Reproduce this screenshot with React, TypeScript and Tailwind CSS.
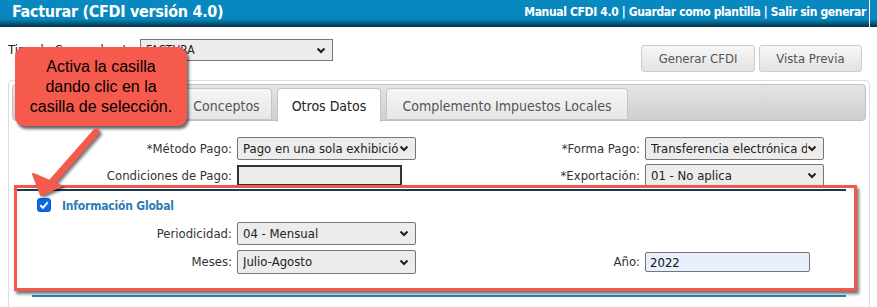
import React from "react";

const fuente = "font-['DejaVu_Sans_Condensed','DejaVu_Sans',sans-serif]";

function Chevron() {
  return (
    <svg width="10" height="7" viewBox="0 0 10 7" className="shrink-0">
      <polyline points="1.5,1.5 5,5 8.5,1.5" fill="none" stroke="#1f1f1f" strokeWidth="2" />
    </svg>
  );
}

function Combo({ texto, ancho, alto = 23 }: any) {
  return (
    <div
      className="flex items-center justify-between border border-[#767676] bg-[#ececec] rounded-[2px] pl-[5px] pr-[6px] text-[13px] text-[#222] overflow-hidden"
      style={{ width: ancho, height: alto }}
    >
      <span className="whitespace-nowrap overflow-hidden">{texto}</span>
      <Chevron />
    </div>
  );
}

function Etiqueta({ texto, ancho }: any) {
  return (
    <div className="text-right text-[13px] text-[#333] pr-[5px] whitespace-nowrap" style={{ width: ancho }}>
      {texto}
    </div>
  );
}

function Tab({ texto, activo, ancho }: any) {
  return (
    <div
      className={
        activo
          ? "h-[34px] pt-[7px] bg-white border border-[#c5c5c5] border-b-0 rounded-t-[4px] text-[14px] text-[#222] text-center whitespace-nowrap -mb-[2px]"
          : "h-[32px] pt-[7px] bg-[linear-gradient(#f6f6f6,#e6e6e6)] border border-[#c5c5c5] rounded-t-[4px] text-[14px] text-[#555] text-center whitespace-nowrap"
      }
      style={{ width: ancho }}
    >
      {texto}
    </div>
  );
}

export default function App() {
  return (
    <main className={`relative w-[877px] h-[307px] overflow-hidden bg-white ${fuente}`}>
      {/* barra superior */}
      <header className="h-[27px] flex items-center justify-between pl-[12px] bg-[linear-gradient(to_bottom,#0889c0_0%,#0786bc_72%,#055a80_86%,#0b3046_100%)]">
        <h1 className="text-[16px] tracking-[-0.3px] font-bold text-white leading-none pb-[3px]">Facturar (CFDI versión 4.0)</h1>
        <div className="flex items-center h-full">
          <span className="text-[12px] tracking-[-0.35px] font-bold text-white pb-[3px] pr-[2px]">
            Manual CFDI 4.0 | Guardar como plantilla | Salir sin generar
          </span>
          <div className="w-[1px] h-full bg-white ml-[1px] mr-[7px]" />
        </div>
      </header>

      {/* tipo de comprobante y botones */}
      <div className="flex justify-between items-start pl-[8px] pr-[15px] mt-[12px]">
        <div className="flex items-center">
          <span className="text-[13px] text-[#222] w-[132px] whitespace-nowrap">Tipo de Comprobante:</span>
          <div className="flex items-center justify-between w-[193px] h-[22px] border border-[#767676] bg-[#ececec] pl-[5px] pr-[6px] text-[12px] text-[#222]">
            FACTURA
            <Chevron />
          </div>
        </div>
        <div className="flex gap-[4px] mt-[6px]">
          <button className="w-[114px] h-[27px] border border-[#cccccc] rounded-[3px] bg-[linear-gradient(#f7f7f7,#e2e2e2)] text-[13px] text-[#555]">
            Generar CFDI
          </button>
          <button className="w-[103px] h-[27px] border border-[#cccccc] rounded-[3px] bg-[linear-gradient(#f7f7f7,#e2e2e2)] text-[13px] text-[#555]">
            Vista Previa
          </button>
        </div>
      </div>

      {/* panel de pestañas */}
      <section className="ml-[8px] mr-[7px] mt-[8px] border border-[#dddddd] rounded-[4px] h-[260px]">
        <div className="mx-[3px] mt-[3px] h-[37px] border border-[#c0c0c0] rounded-[4px] bg-[linear-gradient(#e4e4e4,#cfcfcf)] flex items-end gap-[5px] pl-[4px]">
          <Tab texto="Datos Generales" ancho={159} />
          <Tab texto="Conceptos" ancho={91} />
          <Tab texto="Otros Datos" ancho={104} activo />
          <Tab texto="Complemento Impuestos Locales" ancho={242} />
        </div>

        <div className="pt-[16px]">
          <div className="flex items-center h-[23px]">
            <Etiqueta texto="*Método Pago:" ancho={228} />
            <Combo texto="Pago en una sola exhibición" ancho={179} />
            <Etiqueta texto="*Forma Pago:" ancho={229} />
            <Combo texto="Transferencia electrónica de fondos" ancho={179} />
          </div>
          <div className="flex items-center h-[23px] mt-[4px]">
            <Etiqueta texto="Condiciones de Pago:" ancho={228} />
            <div className="w-[165px] h-[21px] border-2 border-[#333] bg-[#ececec]" />
            <Etiqueta texto="*Exportación:" ancho={243} />
            <Combo texto="01 - No aplica" ancho={179} />
          </div>

          {/* información global */}
          <div className="relative ml-[5px] -mt-[2px] w-[843px] h-[106px] border-[3px] border-[#f4574a] shadow-[2px_3px_3px_rgba(0,0,0,0.55)]">
            <div className="border-t-2 border-[#123b55] mt-[1px] mr-[8px]">
              <div className="flex items-center pl-[20px] pt-[3px] gap-[11px]">
                <svg width="14" height="14" viewBox="0 0 14 14">
                  <rect x="0.5" y="0.5" width="13" height="13" rx="2.5" fill="#0b68e6" stroke="#0a5cc9" />
                  <polyline points="3.3,7.2 6,9.8 10.8,4.2" fill="none" stroke="white" strokeWidth="2" />
                </svg>
                <span className="text-[12px] tracking-[-0.2px] font-bold text-[#2d7bb7] mt-[3px]">Información Global</span>
              </div>
              <div className="flex items-center h-[23px] mt-[7px]">
                <Etiqueta texto="Periodicidad:" ancho={220} />
                <Combo texto="04 - Mensual" ancho={179} />
              </div>
              <div className="flex items-center h-[24px] mt-[5px]">
                <Etiqueta texto="Meses:" ancho={220} />
                <Combo texto="Julio-Agosto" ancho={179} alto={24} />
                <Etiqueta texto="Año:" ancho={229} />
                <div className="w-[165px] h-[20px] border border-[#767676] rounded-[2px] bg-[#e8f0fe] text-[13px] text-[#111] pl-[4px] leading-[19px]">
                  2022
                </div>
              </div>
            </div>
          </div>
          <div className="ml-[23px] mt-[4px] w-[814px] h-[2px] bg-[#1a89c4]" />
        </div>
      </section>

      {/* globo de ayuda */}
      <div className="absolute left-[15px] top-[47px] w-[172px] h-[79px] rounded-[9px] bg-[#f65a4d] shadow-[2px_3px_3px_rgba(0,0,0,0.6)] flex items-center justify-center text-center font-['Liberation_Sans',Arial,sans-serif] text-[16px] leading-[20px] text-black">
        Activa la casilla
        <br />
        dando clic en la
        <br />
        casilla de selección.
      </div>
      <svg className="absolute left-0 top-0" width="877" height="307" viewBox="0 0 877 307">
        <g style={{ filter: "drop-shadow(2px 2px 1.5px rgba(0,0,0,0.55))" }}>
          <line x1="96" y1="132" x2="52" y2="182" stroke="#f65a4d" strokeWidth="7" strokeLinecap="round" />
          <polygon points="41,195 33,174 61,186" fill="#f65a4d" stroke="#f65a4d" strokeWidth="2" strokeLinejoin="round" />
        </g>
      </svg>
    </main>
  );
}
